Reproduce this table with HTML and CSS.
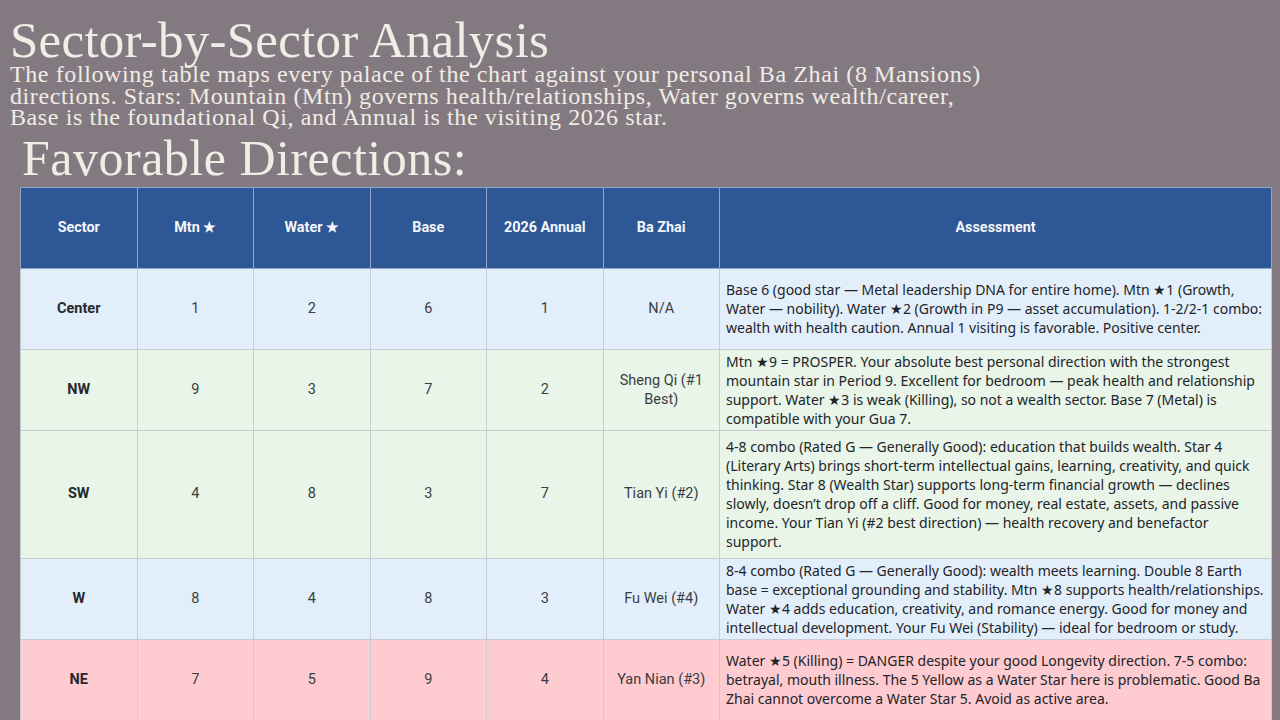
FILE: index.html
```html
<!DOCTYPE html>
<html lang="en">
<head>
<meta charset="utf-8">
<title>Sector-by-Sector Analysis</title>
<link rel="stylesheet" href="styles.css">
</head>
<body>
<main class="page">
  <header class="intro">
    <h1 class="title">Sector-by-Sector Analysis</h1>
    <p class="lead">The following table maps every palace of the chart against your personal Ba Zhai (8 Mansions)<br>directions. Stars: Mountain (Mtn) governs health/relationships, Water governs wealth/career,<br>Base is the foundational Qi, and Annual is the visiting 2026 star.</p>
  </header>
  <h2 class="subtitle">Favorable Directions:</h2>
  <table class="grid">
    <colgroup>
      <col class="c-num"><col class="c-num"><col class="c-num"><col class="c-num"><col class="c-num"><col class="c-num"><col class="c-text">
    </colgroup>
    <thead>
      <tr>
        <th>Sector</th><th>Mtn ★</th><th>Water ★</th><th>Base</th><th>2026 Annual</th><th>Ba Zhai</th><th>Assessment</th>
      </tr>
    </thead>
    <tbody>
      <tr class="blue">
        <td class="sector">Center</td><td>1</td><td>2</td><td>6</td><td>1</td><td>N/A</td>
        <td class="note">Base 6 (good star — Metal leadership DNA for entire home). Mtn ★1 (Growth, Water — nobility). Water ★2 (Growth in P9 — asset accumulation). 1-2/2-1 combo: wealth with health caution. Annual 1 visiting is favorable. Positive center.</td>
      </tr>
      <tr class="green">
        <td class="sector">NW</td><td>9</td><td>3</td><td>7</td><td>2</td><td>Sheng Qi (#1 Best)</td>
        <td class="note">Mtn ★9 = PROSPER. Your absolute best personal direction with the strongest mountain star in Period 9. Excellent for bedroom — peak health and relationship support. Water ★3 is weak (Killing), so not a wealth sector. Base 7 (Metal) is compatible with your Gua 7.</td>
      </tr>
      <tr class="green tall">
        <td class="sector">SW</td><td>4</td><td>8</td><td>3</td><td>7</td><td>Tian Yi (#2)</td>
        <td class="note">4-8 combo (Rated G — Generally Good): education that builds wealth. Star 4 (Literary Arts) brings short-term intellectual gains, learning, creativity, and quick thinking. Star 8 (Wealth Star) supports long-term financial growth — declines slowly, doesn’t drop off a cliff. Good for money, real estate, assets, and passive income. Your Tian Yi (#2 best direction) — health recovery and benefactor support.</td>
      </tr>
      <tr class="blue">
        <td class="sector">W</td><td>8</td><td>4</td><td>8</td><td>3</td><td>Fu Wei (#4)</td>
        <td class="note">8-4 combo (Rated G — Generally Good): wealth meets learning. Double 8 Earth base = exceptional grounding and stability. Mtn ★8 supports health/relationships. Water ★4 adds education, creativity, and romance energy. Good for money and intellectual development. Your Fu Wei (Stability) — ideal for bedroom or study.</td>
      </tr>
      <tr class="pink">
        <td class="sector">NE</td><td>7</td><td>5</td><td>9</td><td>4</td><td>Yan Nian (#3)</td>
        <td class="note">Water ★5 (Killing) = DANGER despite your good Longevity direction. 7-5 combo: betrayal, mouth illness. The 5 Yellow as a Water Star here is problematic. Good Ba Zhai cannot overcome a Water Star 5. Avoid as active area.</td>
      </tr>
    </tbody>
  </table>
</main>
</body>
</html>
```
FILE: styles.css
```css
html, body {
  margin: 0;
  padding: 0;
  background: #837a81;
  overflow: hidden;
}
.page {
  width: 1280px;
  height: 720px;
  overflow: hidden;
  color: #f1ece4;
  font-family: "Liberation Serif", "Times New Roman", serif;
}
.intro {
  padding: 17px 0 0 10px;
}
.title {
  margin: 0;
  font-weight: normal;
  font-size: 51px;
  line-height: 47px;
  letter-spacing: 0.25px;
}
.lead {
  margin: 0;
  font-size: 24px;
  line-height: 21.5px;
  letter-spacing: 0.6px;
}
.subtitle {
  margin: 5px 0 0 22px;
  font-weight: normal;
  font-size: 50px;
  line-height: 48px;
  letter-spacing: 0.5px;
}
.grid {
  margin: 5px 0 0 20px;
  width: 1251px;
  border-collapse: collapse;
  table-layout: fixed;
  font-family: "Noto Sans", Roboto, sans-serif;
  font-size: 14px;
  border: 1px solid #a9b9d3;
}
.c-num { width: 116.5px; }
.c-text { width: 552px; }
.grid th {
  background: #2d5795;
  color: #f4f6fb;
  font-family: Roboto, "Noto Sans", sans-serif;
  font-size: 14.4px;
  font-weight: 700;
  height: 80px;
  padding: 0 6px;
  text-align: center;
  border: 1px solid #8ea4c8;
}
.grid td {
  height: 76px;
  padding: 2px 6px;
  text-align: center;
  vertical-align: middle;
  color: #3b3d42;
  line-height: 19px;
  border: 1px solid #c6ccd4;
}
.grid .tall td {
  padding-top: 6px;
  padding-bottom: 7px;
}
.grid td:not(.note) {
  font-family: Roboto, "Noto Sans", sans-serif;
  font-size: 14.5px;
}
.grid td.sector {
  font-weight: 700;
  color: #26282c;
}
.grid td.note {
  text-align: left;
  color: #222428;
}
.blue td { background: #e2effb; }
.green td { background: #e8f5e8; }
.pink td { background: #fecbd0; }
```
